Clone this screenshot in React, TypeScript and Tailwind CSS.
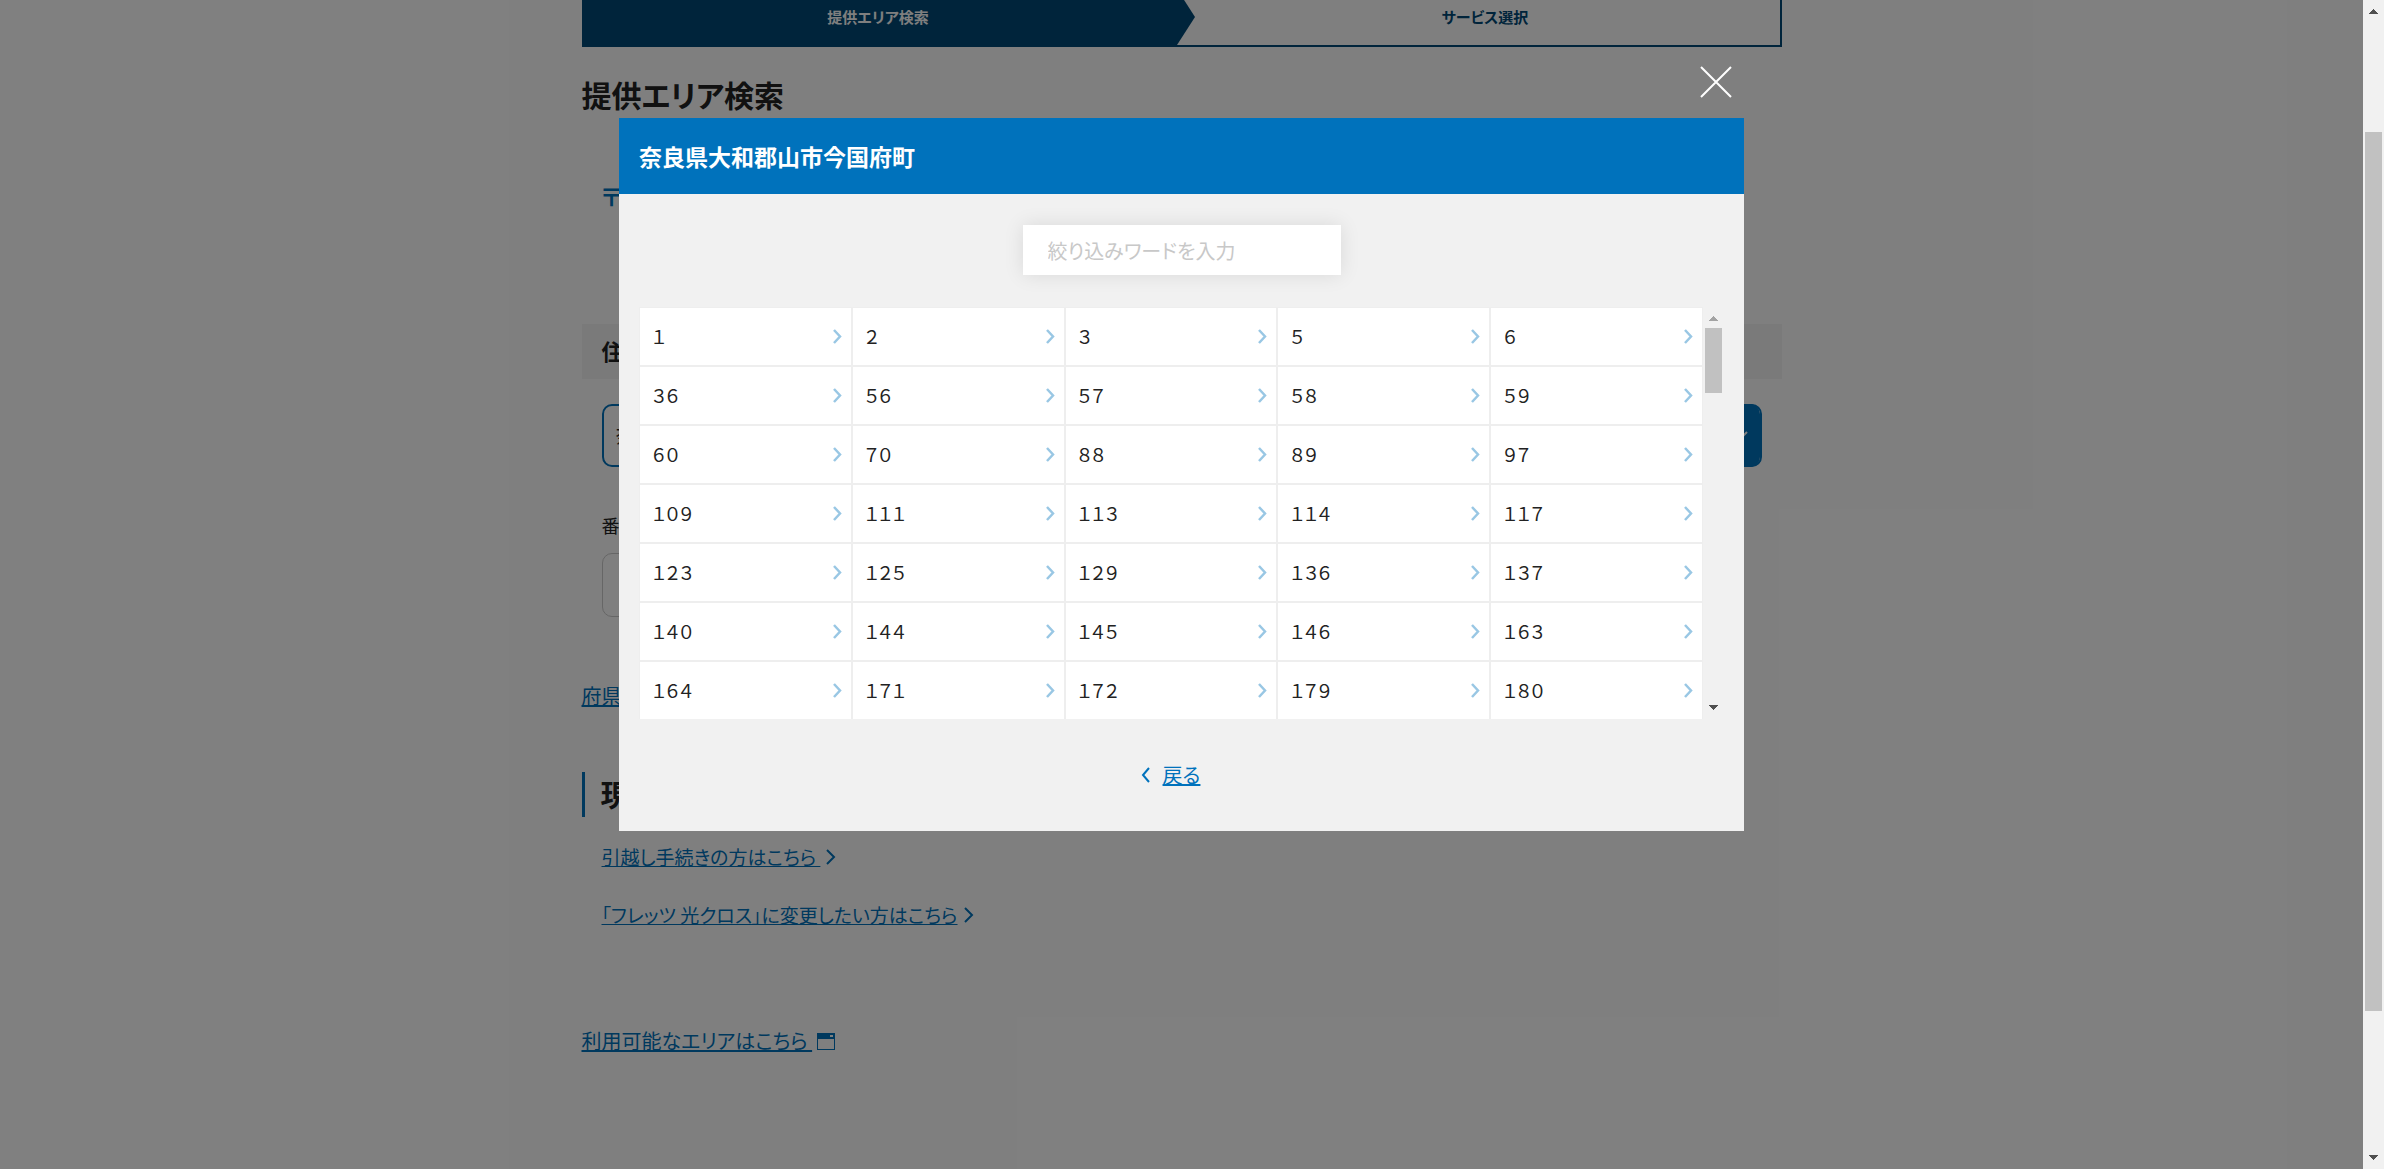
import React from "react";

const rows: string[][] = [
  ["1", "2", "3", "5", "6"],
  ["36", "56", "57", "58", "59"],
  ["60", "70", "88", "89", "97"],
  ["109", "111", "113", "114", "117"],
  ["123", "125", "129", "136", "137"],
  ["140", "144", "145", "146", "163"],
  ["164", "171", "172", "179", "180"],
];

const toFullWidth = (s: string) =>
  s.replace(/[0-9]/g, (d) => String.fromCharCode(d.charCodeAt(0) + 0xfee0));

function Chevron({ className, d = "M1 1 L8 8 L1 15", width = 2 }: { className: string; d?: string; width?: number }) {
  return (
    <svg viewBox="0 0 10 16" className={className} fill="none" stroke="currentColor" strokeWidth={width} aria-hidden="true">
      <path d={d} />
    </svg>
  );
}

function Scrollbar({ thumb, topArrow, className }: { thumb: React.ReactNode; topArrow: string; className: string }) {
  return (
    <div className={`flex w-[21px] shrink-0 flex-col items-center bg-[#f1f1f1] ${className}`} aria-hidden="true">
      <svg viewBox="0 0 9 5" className={`h-[5px] w-[9px] shrink-0 ${topArrow}`} shapeRendering="crispEdges">
        <path d="M4.5 0 L9 5 H0 Z" fill="currentColor" />
      </svg>
      {thumb}
      <svg viewBox="0 0 9 5" className="h-[5px] w-[9px] shrink-0 text-[#505050]" shapeRendering="crispEdges">
        <path d="M0 0 H9 L4.5 5 Z" fill="currentColor" />
      </svg>
    </div>
  );
}

function Page() {
  return (
    <main className="mx-auto -mt-[13px] w-full max-w-[1200px]">
      <ol className="flex h-[60px] gap-[18px] border-2 border-[#004876] text-[15px] font-bold">
        <li className="relative flex flex-1 items-center justify-center bg-[#004876] text-white">
          提供エリア検索
          <svg viewBox="0 0 22 56" className="absolute top-0 left-full h-[56px] w-[22px]" aria-hidden="true">
            <path d="M0 0 H4 L22 28 L4 56 H0 Z" fill="#004876" />
          </svg>
        </li>
        <li className="flex flex-1 items-center justify-center text-[#004876]">サービス選択</li>
      </ol>
      <h1 className="mt-[27px] text-[30px] leading-[40px] font-bold">提供エリア検索</h1>
      <p className="mt-[67px] pl-5 text-[24px] leading-[30px] font-bold text-[#0072bc]">〒</p>
      <h2 className="mt-[113px] flex h-[55px] items-center bg-[#f4f4f4] pb-[2px] pl-5 text-[22px] font-bold">住所</h2>
      <div className="px-5">
        <button type="button" className="mt-[25px] flex h-[63px] w-full items-center justify-between rounded-[10px] border-2 border-[#0072bc] pl-3 text-left text-[20px]">
          <span>奈</span>
          <span className="flex h-[63px] w-[56px] items-center justify-end rounded-r-[10px] bg-[#0072bc] pr-3 text-white">
            <svg viewBox="0 0 16 10" className="h-[10px] w-[16px]" fill="none" stroke="currentColor" strokeWidth="2" aria-hidden="true">
              <path d="M1 1 L8 8 L15 1" />
            </svg>
          </span>
        </button>
        <label htmlFor="banchi" className="mt-[43px] block text-[18px] leading-[30px]">番地</label>
        <input id="banchi" className="mt-[13px] block h-[64px] w-1/2 rounded-[10px] border border-[#cccccc] bg-transparent px-4" />
      </div>
      <p className="mt-[64px] text-[20px] leading-[30px]">
        <a href="#pref" className="text-[#0072bc] underline">府県</a>
      </p>
      <h2 className="mt-[61px] flex h-[45px] items-center border-l-[3px] border-[#0072bc] pb-[2px] pl-4 text-[30px] font-bold">現</h2>
      <ul className="mt-[25px] flex flex-col gap-7 pl-5 text-[19px] leading-[30px] text-[#0072bc]">
        <li className="flex items-center gap-1.5">
          <a href="#move" className="whitespace-pre underline">引越し手続きの方はこちら </a>
          <Chevron className="h-[16px] w-[10px]" />
        </li>
        <li className="flex items-center gap-1.5">
          <a href="#cross" className="underline">「フレッツ 光クロス」に変更したい方はこちら</a>
          <Chevron className="h-[16px] w-[10px]" />
        </li>
      </ul>
      <p className="mt-[96px] flex items-center gap-[5px] text-[20px] leading-[30px] text-[#0072bc]">
        <a href="#area" className="whitespace-pre underline decoration-2">利用可能なエリアはこちら </a>
        <svg viewBox="0 0 18 17" className="h-[17px] w-[18px]" aria-hidden="true">
          <path d="M0 0 H18 V17 H0 Z M1 6 V16 H17 V6 Z M13 2 V4 H16 V2 Z" fill="currentColor" fillRule="evenodd" />
        </svg>
      </p>
    </main>
  );
}

function AddressDialog() {
  return (
    <section role="dialog" aria-modal="true" aria-labelledby="dialog-title" className="relative w-full max-w-[1125px] bg-[#f1f1f1]">
      <button type="button" aria-label="閉じる" className="absolute -top-[52px] right-3 text-white">
        <svg viewBox="0 0 32 32" className="size-8" fill="none" stroke="currentColor" strokeWidth="2" aria-hidden="true">
          <path d="M1 1 L31 31 M31 1 L1 31" />
        </svg>
      </button>
      <header className="flex h-[76px] items-center bg-[#0072bc] px-5">
        <h2 id="dialog-title" className="text-[23px] font-bold text-white">奈良県大和郡山市今国府町</h2>
      </header>
      <div className="px-5 pt-[31px] pb-[41px]">
        <input
          aria-label="絞り込みワード"
          placeholder="絞り込みワードを入力"
          className="mx-auto block h-[50px] w-[318px] bg-white px-[25px] text-[20px] shadow-[0_0_20px_rgba(0,0,0,0.1)] placeholder:text-[#c8c8c8]"
        />
        <div className="mt-8 flex">
          <ul className="grid flex-1 grid-cols-5 gap-[2px] bg-[#eeeeee] px-px pt-px">
            {rows.flat().map((n) => (
              <li key={n} className="bg-white">
                <button type="button" className="flex h-[57px] w-full items-center justify-between pr-2 pl-3 text-[18px]">
                  <span>{toFullWidth(n)}</span>
                  <Chevron className="h-[16px] w-[10px] text-[#99c7e4]" width={2.5} d="M1 1 L7 7.5 L1 14" />
                </button>
              </li>
            ))}
          </ul>
          <Scrollbar
            className="pt-[9px] pb-[9px]"
            topArrow="text-[#a3a3a3]"
            thumb={
              <div className="flex w-[17px] flex-1 flex-col pt-[7px]">
                <div className="h-[65px] bg-[#c1c1c1]" />
              </div>
            }
          />
        </div>
        <div className="mt-[41px] flex items-center justify-center text-[20px] leading-[30px] text-[#0072bc]">
          <button type="button" className="mr-[22px] flex items-center gap-3">
            <Chevron className="h-[16px] w-[10px]" d="M8 1 L2 8 L8 15" />
            <span className="underline decoration-2">戻る</span>
          </button>
        </div>
      </div>
    </section>
  );
}

export default function App() {
  return (
    <div
      lang="ja"
      className="flex h-screen overflow-hidden bg-white font-['Noto_Sans_CJK_JP',sans-serif] text-[#222222] [font-feature-settings:'palt']"
    >
      <div className="relative min-w-0 flex-1 overflow-hidden">
        <Page />
        <div className="absolute inset-0 flex items-start justify-center bg-black/50 pt-[118px]">
          <AddressDialog />
        </div>
      </div>
      <Scrollbar
        className="pt-[9px] pb-[9px]"
        topArrow="text-[#505050]"
        thumb={
          <div className="flex w-[17px] flex-1 flex-col pt-[118px] pb-[144px]">
            <div className="flex-1 bg-[#c1c1c1]" />
          </div>
        }
      />
    </div>
  );
}
